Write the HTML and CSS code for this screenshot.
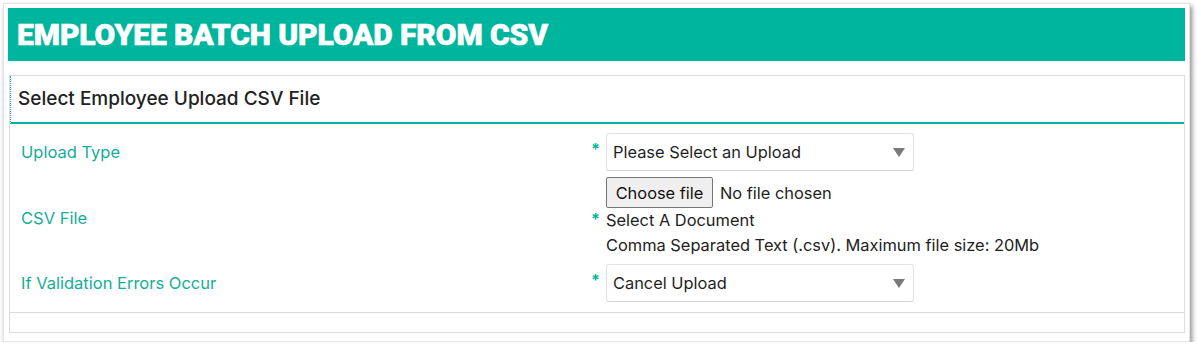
FILE: index.html
```html
<!DOCTYPE html>
<html lang="en">

<head>
  <meta charset="UTF-8" />
  <title>Employee Batch Upload</title>
  <link rel="stylesheet" href="styles.css">
</head>

<body>
  <div class="frame">
    <h1 class="page-title">EMPLOYEE BATCH UPLOAD FROM CSV</h1>

    <div class="panel">
      <div class="panel-heading">Select Employee Upload CSV File</div>

      <div class="panel-body">
        <div class="form-row">
          <label class="form-label">Upload Type</label>
          <div class="form-control">
            <span class="req">*</span>
            <div class="select-box">
              <span>Please Select an Upload</span>
              <span class="caret"></span>
            </div>
          </div>
        </div>

        <div class="form-row">
          <label class="form-label">CSV File</label>
          <div class="form-control">
            <span></span>
            <div class="file-picker">
              <button class="file-btn">Choose file</button>
              <span>No file chosen</span>
            </div>
            <span class="req">*</span>
            <div class="hint">Select A Document</div>
            <span></span>
            <div class="hint">Comma Separated Text (.csv). Maximum file size: 20Mb</div>
          </div>
        </div>

        <div class="form-row">
          <label class="form-label">If Validation Errors Occur</label>
          <div class="form-control">
            <span class="req">*</span>
            <div class="select-box">
              <span>Cancel Upload</span>
              <span class="caret"></span>
            </div>
          </div>
        </div>
      </div>

      <div class="panel-footer"></div>
    </div>
  </div>
</body>

</html>
```

FILE: styles.css
```css
:root {
  --teal: #00b59d;
  --label-color: #14ae98;
  --text-color: #222;
  --line-color: #dcdcdc;
}

* {
  margin: 0;
  box-sizing: border-box;
}

body {
  font-family: Inter, "Noto Sans", sans-serif;
  background-color: #fff;
  color: var(--text-color);
}

.frame {
  width: 1187px;
  height: 339px;
  margin: 3px 0 0 3px;
  padding: 4px 4px 0 4px;
  background: #fff;
  border: 1px solid #e4e4e4;
  box-shadow: 2px 3px 5px rgba(0, 0, 0, 0.45);
}

.page-title {
  background-color: var(--teal);
  color: #fff;
  height: 53px;
  padding: 0 9px;
  font-family: Roboto, Inter, sans-serif;
  font-size: 30px;
  font-weight: 900;
  letter-spacing: -0.1px;
  -webkit-text-stroke: 0.6px #fff;
  line-height: 53px;
}

.panel {
  margin: 14px 0 0 1px;
  border: 1px solid var(--line-color);
}

.panel-heading {
  height: 48px;
  padding: 0 7px;
  border-left: 1px dotted var(--teal);
  border-bottom: 2px solid var(--teal);
  font-size: 19px;
  font-weight: 500;
  line-height: 46px;
}

.panel-body {
  padding: 9px 0 10px 11px;
  display: flex;
  flex-direction: column;
  gap: 6px;
}

.form-row {
  display: grid;
  grid-template-columns: 570px 1fr;
  align-items: center;
}

.form-label {
  color: var(--label-color);
  font-size: 16.5px;
}

.form-control {
  display: grid;
  grid-template-columns: 15px 1fr;
  align-items: center;
  font-size: 16.4px;
}

.req {
  color: var(--teal);
  font-size: 16px;
  font-weight: 700;
  align-self: start;
  line-height: 22px;
}

.form-row:first-child .req,
.form-row:last-child .req {
  align-self: center;
  line-height: 1;
  margin-top: -6px;
}

.select-box {
  width: 308px;
  height: 38px;
  padding: 0 8px 0 6px;
  border: 1px solid #e3e3e3;
  border-bottom-color: #d2d2d2;
  border-radius: 3px;
  display: flex;
  align-items: center;
  justify-content: space-between;
  color: #1f1f1f;
}

.caret {
  width: 0;
  height: 0;
  border-left: 6px solid transparent;
  border-right: 6px solid transparent;
  border-top: 9px solid #7a7a7a;
}

.file-picker {
  display: flex;
  align-items: center;
  gap: 7px;
}

.file-btn {
  height: 31px;
  width: 107px;
  background: #efefef;
  border: 1px solid #767676;
  border-radius: 2px;
  font-family: inherit;
  font-size: 16.4px;
  color: #111;
}

.hint {
  line-height: 25px;
  font-size: 16.4px;
}

.panel-footer {
  height: 20px;
  border-top: 1px solid var(--line-color);
}
```
